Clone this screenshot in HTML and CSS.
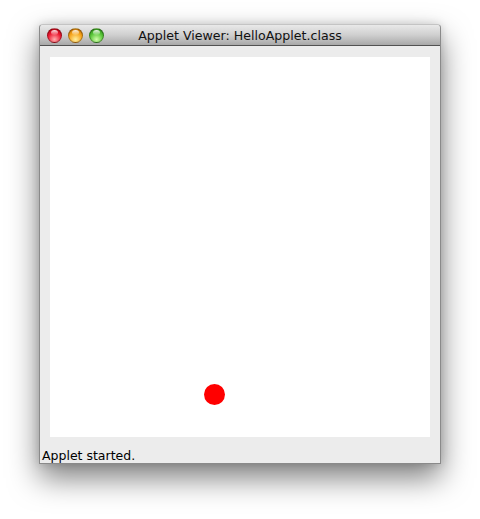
FILE: index.html
```html
<!DOCTYPE html>
<html lang="en">
<head>
    <meta charset="UTF-8">
    <title>Applet Viewer: HelloApplet.class</title>
    <link rel="stylesheet" href="styles.css">
</head>
<body>
    <div class="window">
        <div class="titlebar">
            <div class="lights">
                <span class="light red"></span>
                <span class="light yellow"></span>
                <span class="light green"></span>
            </div>
            <div class="title">Applet Viewer: HelloApplet.class</div>
        </div>
        <div class="content">
            <svg class="canvas" width="380" height="380" viewBox="0 0 380 380">
                <circle cx="164.5" cy="337.5" r="10.5" fill="#ff0000"/>
            </svg>
            <div class="status">Applet started.</div>
        </div>
    </div>
</body>
</html>
```

FILE: styles.css
```css
* {
    margin: 0;
    padding: 0;
    box-sizing: border-box;
}

html, body {
    min-height: 519px;
}

body {
    background: #ffffff;
    font-family: 'Lucida Grande', 'DejaVu Sans', sans-serif;
    padding: 24px 0 0 39px;
}

.window {
    width: 402px;
    border: 1px solid #8a8a8a;
    border-top-color: #c4c4c4;
    border-radius: 4px 4px 0 0;
    background: #ececec;
    box-shadow: 0 14px 30px rgba(0, 0, 0, 0.5), 0 0 10px rgba(0, 0, 0, 0.15);
}

.titlebar {
    position: relative;
    height: 21px;
    border-bottom: 1px solid #515151;
    border-radius: 4px 4px 0 0;
    background: linear-gradient(#e9e9e9, #cfcfcf 50%, #a8a8a8);
    display: flex;
    align-items: center;
    justify-content: center;
}

.lights {
    position: absolute;
    left: 7px;
    top: 3px;
    display: flex;
    gap: 6px;
}

.light {
    position: relative;
    width: 15px;
    height: 15px;
    border-radius: 50%;
    border: 1px solid rgba(0, 0, 0, 0.3);
}

.light::after {
    content: "";
    position: absolute;
    left: 3px;
    top: 1px;
    width: 7px;
    height: 5px;
    border-radius: 50%;
    background: linear-gradient(rgba(255, 255, 255, 0.9), rgba(255, 255, 255, 0.1));
}

.red {
    background: radial-gradient(circle at 50% 80%, #ffb0b0, #ec1830 55%, #a4000c);
}

.yellow {
    background: radial-gradient(circle at 50% 80%, #fff0a0, #f6a218 55%, #b26000);
}

.green {
    background: radial-gradient(circle at 50% 80%, #d0ffa8, #56c436 55%, #237c12);
}

.title {
    font-size: 12.6px;
    color: #111111;
    padding-top: 1px;
}

.content {
    padding: 11px 10px 0 10px;
}

.canvas {
    display: block;
    background: #ffffff;
}

.status {
    height: 26px;
    margin-left: -8px;
    padding-top: 11px;
    font-size: 12.5px;
    color: #000000;
}
```
